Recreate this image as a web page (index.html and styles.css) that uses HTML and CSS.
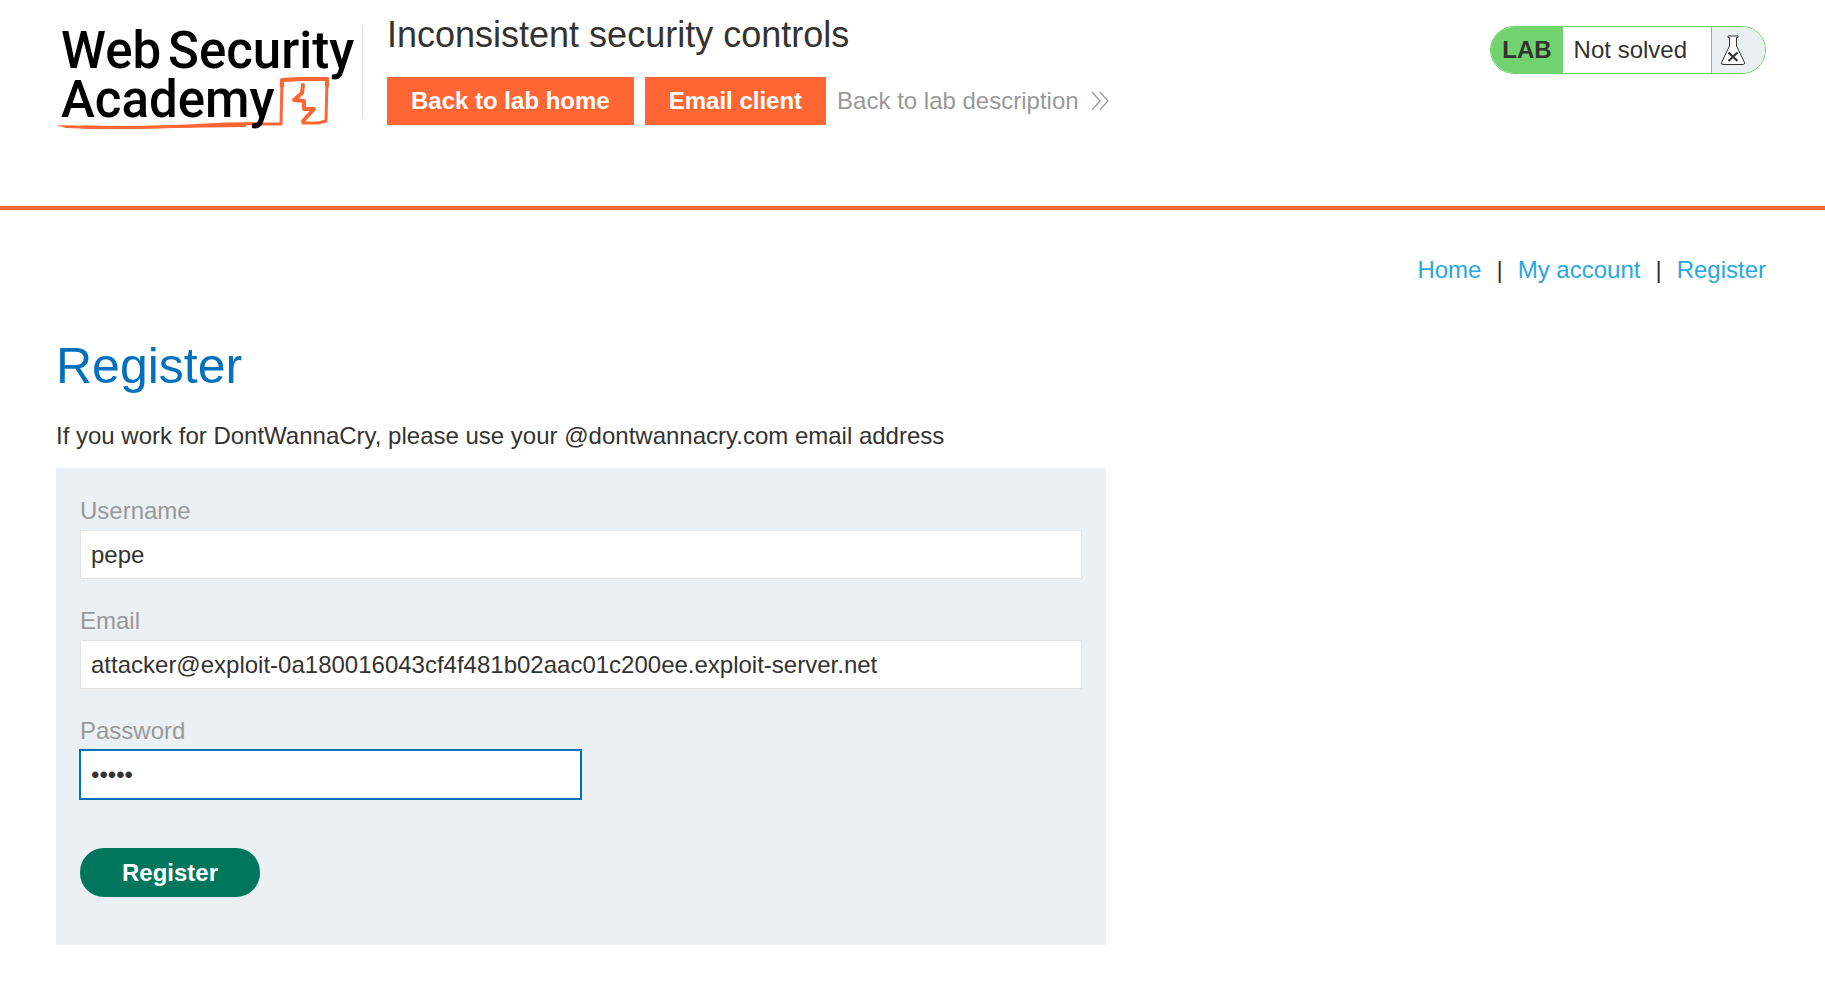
FILE: index.html
```html
<!DOCTYPE html>
<html lang="en">
<head>
<meta charset="utf-8">
<title>Inconsistent security controls</title>
<link rel="stylesheet" href="styles.css">
</head>
<body>
<header class="lab-header">
  <a class="logo" href="#" aria-label="Web Security Academy">
    <svg class="logo-art" viewBox="0 0 306 104" width="306" height="104">
      <g fill="none" stroke="#ff6633" stroke-linecap="round" stroke-linejoin="round">
        <path d="M26 101C70 102 120 101 150 99S205 98 225 98L226 54L271 53L270 95L262 97L247 97" stroke-width="3"/>
        <path d="M0 99C20 100 60 100 90 100L190 98V101L110 102L40 103L10 102Z" fill="#ff6633" stroke="none"/>
        <path d="M226 60V54L242 53L271 53V60" stroke-width="4"/>
        <path d="M247 59L246 67L238 74L248 75L248 83L258 83L247 95" stroke-width="4"/>
      </g>
      <g class="logo-text">
        <text x="5" y="42">Web</text>
        <text x="112" y="42">Security</text>
        <text x="5" y="91">Academy</text>
      </g>
    </svg>
  </a>
  <div class="title-block">
    <h2 class="lab-title">Inconsistent security controls</h2>
    <div class="lab-links">
      <a class="lab-button" href="#">Back to lab home</a>
      <a class="lab-button" href="#">Email client</a>
      <a class="back-link" href="#">Back to lab description
        <svg width="18" height="20" viewBox="0 0 18 20" fill="none" stroke="#999" stroke-width="1.3"><path d="M1 1L9 10L1 19M9 1L17 10L9 19"/></svg>
      </a>
    </div>
  </div>
  <div class="status">
    <span class="status-tag">LAB</span>
    <p class="status-text">Not solved</p>
    <span class="status-icon">
      <svg width="26" height="32" viewBox="0 0 26 32"><path d="M8 2H18V3.500H16.500V12L24.500 28.500Q25 30.500 23 30.500H3Q1 30.500 1.500 28.500L9.500 12V3.500H8Z" fill="#fff" stroke="#333332"/><path d="M8.500 18.500L17.500 27M17.500 18.500L8.500 27" stroke="#333332" stroke-width="2"/></svg>
    </span>
  </div>
</header>
<main class="page">
  <nav class="top-links">
    <a href="#">Home</a><span>|</span><a href="#">My account</a><span>|</span><a href="#">Register</a>
  </nav>
  <h1 class="page-title">Register</h1>
  <p class="hint">If you work for DontWannaCry, please use your @dontwannacry.com email address</p>
  <form class="register-form">
    <label for="username">Username</label>
    <input id="username" type="text" value="pepe">
    <label for="email">Email</label>
    <input id="email" type="email" value="attacker@exploit-0a180016043cf4f481b02aac01c200ee.exploit-server.net">
    <label for="password">Password</label>
    <input class="active" id="password" type="password" value="peter">
    <button type="button">Register</button>
  </form>
</main>
</body>
</html>
```
FILE: styles.css
```css
* { box-sizing: border-box; }
body {
  margin: 0;
  background: #fff;
  color: #333332;
  font: 24px/36px "Liberation Sans", Arial, sans-serif;
}
a { color: #29a7df; text-decoration: none; }
h1, h2, p { margin: 0; font-weight: 400; }

.lab-header {
  display: flex;
  align-items: flex-start;
  min-height: 210px;
  padding: 26px 59px 0 56px;
  border-bottom: 4px solid #ff6633;
}
.logo {
  height: 93px;
  width: 307px;
  border-right: 1px solid #e0e0e0;
}
.logo-art { display: block; overflow: visible; }
.logo-text {
  fill: #000;
  font: 500 51px Roboto, sans-serif;
}
.title-block { margin: -13px 0 0 24px; }
.lab-title { font-size: 36px; line-height: 44px; }
.lab-links { display: flex; gap: 11px; margin-top: 20px; }
.lab-button {
  padding: 0 24px;
  background: #ff6633;
  color: #fff;
  font-weight: 700;
  line-height: 48px;
}
.back-link {
  display: flex;
  align-items: center;
  gap: 12px;
  color: #999;
}
.status {
  display: flex;
  height: 48px;
  margin-left: auto;
  border: 1px solid #70d36d;
  border-radius: 24px;
  overflow: hidden;
  line-height: 46px;
}
.status-tag {
  padding: 0 11px;
  background: #70d36d;
  font-weight: 700;
}
.status-text { padding: 0 24px 0 11px; }
.status-icon {
  display: flex;
  align-items: center;
  width: 54px;
  padding-left: 8px;
  border-left: 1px solid #70d36d;
  background: #eaeff2;
}

.page { padding: 42px 59px 53px 56px; }
.top-links {
  display: flex;
  justify-content: flex-end;
  gap: 15px;
}
.page-title {
  margin-top: 46px;
  color: #0071bd;
  font-size: 50px;
  line-height: 64px;
}
.hint { margin: 20px 0 14px; }
.register-form {
  display: flex;
  flex-direction: column;
  max-width: 1050px;
  padding: 24px 24px 48px;
  background: #eaf0f3;
}
.register-form label {
  color: #999;
  line-height: 38px;
}
.register-form input {
  width: 100%;
  height: 49px;
  margin-bottom: 23px;
  padding: 0 10px;
  border: 1px solid #e4e4e4;
  border-radius: 0;
  background: #fff;
  color: #333332;
  font: inherit;
  outline: none;
}
.register-form input.active {
  width: 50%;
  border-color: #0071bd;
  box-shadow: 0 0 0 1px #0071bd;
}
.register-form button {
  align-self: flex-start;
  height: 49px;
  margin-top: 26px;
  padding: 0 42px;
  border: 0;
  border-radius: 24px;
  background: #00765d;
  color: #fff;
  font: inherit;
  font-weight: 700;
}
```
